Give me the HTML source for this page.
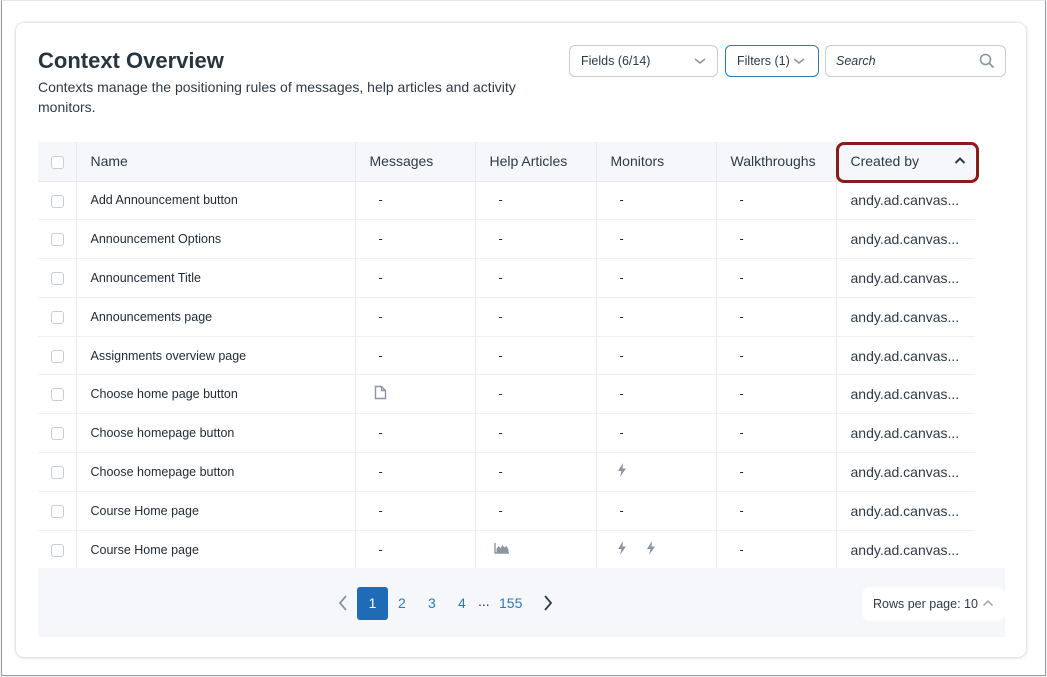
<!DOCTYPE html>
<html><head><style>
*{box-sizing:border-box;margin:0;padding:0}
body{width:1047px;height:677px;background:#f2f3f5;font-family:"Liberation Sans",sans-serif;position:relative;overflow:hidden}
.win{position:absolute;left:1px;top:0;width:1045px;height:676px;background:#fff;border:1px solid #9a9a9a;border-top:1px solid #e6e6e6}
.card{position:absolute;left:16px;top:23px;width:1010px;height:634px;background:#fff;border-radius:8px;box-shadow:0 0 3px rgba(0,0,0,.18),0 1px 4px rgba(0,0,0,.08)}
h1{position:absolute;left:38px;top:48px;font-size:22px;color:#273540;font-weight:bold}
.desc{position:absolute;left:38px;top:77px;width:500px;font-size:14px;line-height:20px;color:#2d3b45}
.btn{position:absolute;top:45px;height:32px;border:1px solid #c7cdd1;border-radius:6px;font-size:12.5px;color:#2d3b45;padding:0 11px;line-height:30px;background:#fff}
.btn svg{position:absolute;top:10px}
table{position:absolute;left:38px;top:142px;border-collapse:collapse;font-size:12.5px;color:#1f2a33}
td,th{height:38.8px;border-left:1px solid #e8ebee;border-bottom:1px solid #eef0f2;text-align:left;font-weight:normal;padding-left:14px;white-space:nowrap}
th{background:#f5f7fa;font-size:14px;color:#2d3b45;height:39px;border-bottom:1px solid #e8ebee}
td:first-child,th:first-child{border-left:none;padding-left:13px}
.cb{display:inline-block;width:13px;height:13px;border:1px solid #c7cdd1;border-radius:3px;background:#fff;vertical-align:middle}
td.c{padding-left:23px}
td.cr{font-size:14px;color:#2d3b45;padding-left:14px}
.pg{position:absolute;left:38px;top:568px;width:967px;height:69px;background:#f5f7fa}
.num{position:absolute;top:19px;font-size:14px;color:#2b7abc}
.rpp{position:absolute;left:862px;top:587px;width:143px;height:34px;background:#fff;border-radius:8px;font-size:12.5px;color:#2d3b45;padding-left:11px;line-height:34px}
</style></head><body>
<div class="win"></div>
<div class="card"></div>
<h1>Context Overview</h1>
<div class="desc">Contexts manage the positioning rules of messages, help articles and activity monitors.</div>
<div class="btn" style="left:569px;width:149px">Fields (6/14)<svg style="left:124px" width="12" height="10" viewBox="0 0 12 10"><path d="M1 3l5 4 5-4" stroke="#8b96a0" stroke-width="1.5" fill="none"/></svg></div>
<div class="btn" style="left:725px;width:94px;border:1.5px solid #2b7abc">Filters (1)<svg style="left:67px" width="12" height="10" viewBox="0 0 12 10"><path d="M1 3l5 4 5-4" stroke="#8b96a0" stroke-width="1.5" fill="none"/></svg></div>
<div class="btn" style="left:825px;width:181px;font-style:italic;padding-left:10px">Search<svg style="left:153px;top:7px" width="16" height="16" viewBox="0 0 16 16"><circle cx="6.5" cy="6.5" r="5" stroke="#8b96a0" stroke-width="1.6" fill="none"/><path d="M10 10l4.5 4.5" stroke="#8b96a0" stroke-width="1.8"/></svg></div>
<table>
<tr><th style="width:38px"><span class="cb"></span></th><th style="width:279px">Name</th><th style="width:120px">Messages</th><th style="width:121px">Help Articles</th><th style="width:120px">Monitors</th><th style="width:120px">Walkthroughs</th><th style="width:139px;position:relative">Created by</th></tr>
<tr><td><span class="cb"></span></td><td>Add Announcement button</td><td class="c">-</td><td class="c">-</td><td class="c">-</td><td class="c">-</td><td class="cr">andy.ad.canvas...</td></tr>
<tr><td><span class="cb"></span></td><td>Announcement Options</td><td class="c">-</td><td class="c">-</td><td class="c">-</td><td class="c">-</td><td class="cr">andy.ad.canvas...</td></tr>
<tr><td><span class="cb"></span></td><td>Announcement Title</td><td class="c">-</td><td class="c">-</td><td class="c">-</td><td class="c">-</td><td class="cr">andy.ad.canvas...</td></tr>
<tr><td><span class="cb"></span></td><td>Announcements page</td><td class="c">-</td><td class="c">-</td><td class="c">-</td><td class="c">-</td><td class="cr">andy.ad.canvas...</td></tr>
<tr><td><span class="cb"></span></td><td>Assignments overview page</td><td class="c">-</td><td class="c">-</td><td class="c">-</td><td class="c">-</td><td class="cr">andy.ad.canvas...</td></tr>
<tr><td><span class="cb"></span></td><td>Choose home page button</td><td style="padding-left:18px"><svg width="13" height="15" viewBox="0 0 13 15"><path d="M1.5 1.5h6l4 4v8h-10z M7.5 1.5v4h4" stroke="#8b96a0" stroke-width="1.4" fill="none"/></svg></td><td class="c">-</td><td class="c">-</td><td class="c">-</td><td class="cr">andy.ad.canvas...</td></tr>
<tr><td><span class="cb"></span></td><td>Choose homepage button</td><td class="c">-</td><td class="c">-</td><td class="c">-</td><td class="c">-</td><td class="cr">andy.ad.canvas...</td></tr>
<tr><td><span class="cb"></span></td><td>Choose homepage button</td><td class="c">-</td><td class="c">-</td><td style="padding-left:20px"><svg width="10" height="14" viewBox="0 0 10 14"><path d="M6 0L1 8h3.5L3 14l6-8.5H5.5z" fill="#8b96a0"/></svg></td><td class="c">-</td><td class="cr">andy.ad.canvas...</td></tr>
<tr><td><span class="cb"></span></td><td>Course Home page</td><td class="c">-</td><td class="c">-</td><td class="c">-</td><td class="c">-</td><td class="cr">andy.ad.canvas...</td></tr>
<tr><td style="border-bottom:none"><span class="cb"></span></td><td style="border-bottom:none">Course Home page</td><td class="c" style="border-bottom:none">-</td><td style="padding-left:18px;border-bottom:none"><svg width="15" height="11" viewBox="0 0 15 11"><path d="M1 0v10h14" stroke="#8b96a0" stroke-width="1.4" fill="none"/><path d="M2.5 9.5V6l2-3 2 2 2-3 2 2.5 2-1.5 2 3.5v3.5z" fill="#8b96a0"/></svg></td><td style="padding-left:20px;border-bottom:none"><svg width="10" height="14" viewBox="0 0 10 14"><path d="M6 0L1 8h3.5L3 14l6-8.5H5.5z" fill="#8b96a0"/></svg><svg style="margin-left:19px" width="10" height="14" viewBox="0 0 10 14"><path d="M6 0L1 8h3.5L3 14l6-8.5H5.5z" fill="#8b96a0"/></svg></td><td class="c" style="border-bottom:none">-</td><td class="cr" style="border-bottom:none">andy.ad.canvas...</td></tr>
</table>
<div style="position:absolute;left:836px;top:142px;width:143px;height:41px;border:3px solid #8b1a1a;border-radius:8px"></div>
<svg style="position:absolute;left:954px;top:156px" width="12" height="10" viewBox="0 0 12 10"><path d="M1.5 7l4.5-4.5 4.5 4.5" stroke="#2d3b45" stroke-width="2" fill="none"/></svg>
<div class="pg">
<svg style="position:absolute;left:300px;top:27px" width="10" height="16" viewBox="0 0 10 16"><path d="M8 1L2 8l6 7" stroke="#8b96a0" stroke-width="1.8" fill="none"/></svg>
<div style="position:absolute;left:319px;top:19px;width:31px;height:33px;background:#1f6bb5;border-radius:3px;color:#fff;font-size:14px;text-align:center;line-height:33px">1</div>
<span class="num" style="left:360px;top:27px">2</span><span class="num" style="left:390px;top:27px">3</span><span class="num" style="left:420px;top:27px">4</span><span class="num" style="left:440px;top:25px;color:#2d3b45">...</span><span class="num" style="left:461px;top:27px">155</span>
<svg style="position:absolute;left:505px;top:27px" width="10" height="16" viewBox="0 0 10 16"><path d="M2 1l6 7-6 7" stroke="#2d3b45" stroke-width="1.8" fill="none"/></svg>
</div>
<div class="rpp">Rows per page: 10<svg style="position:absolute;left:120px;top:12px" width="12" height="9" viewBox="0 0 12 9"><path d="M1.5 6.5l4.5-4.5 4.5 4.5" stroke="#9aa4ad" stroke-width="1.5" fill="none"/></svg></div>
</body></html>
